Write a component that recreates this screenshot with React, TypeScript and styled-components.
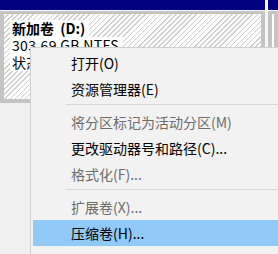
import React from 'react';
import styled, { createGlobalStyle } from 'styled-components';

const Global = createGlobalStyle`
  html, body { margin: 0; padding: 0; background: #f0f0f0; }
  body { font-family: "Noto Sans CJK SC", "Noto Sans", sans-serif; }
`;

const Screen = styled.div`
  position: relative;
  width: 278px;
  height: 254px;
  overflow: hidden;
  background: #f0f0f0;
`;

const DiskRow = styled.div`
  display: flex;
  gap: 3px;
  height: 103px;
  background: #f7f7f7;
`;

const Partition = styled.div<{ $width?: number }>`
  display: flex;
  flex-direction: column;
  gap: 1px;
  width: ${(p) => (p.$width ? `${p.$width}px` : 'auto')};
  flex: ${(p) => (p.$width ? 'none' : '1')};
  min-width: 0;
`;

const Header = styled.div`
  height: 10px;
  background: #000080;
`;

const Body = styled.div<{ $selected?: boolean }>`
  flex: 1;
  min-height: 0;
  overflow: hidden;
  border: 4px solid #c4c4c4;
  border-top-width: 3px;
  padding: 6px 0 0 ${(p) => (p.$selected ? 6 : 0)}px;
  background: ${(p) =>
    p.$selected
      ? 'repeating-linear-gradient(135deg, #ffffff 0px, #ffffff 2.5px, #d0d0d0 2.5px, #d0d0d0 3.6px)'
      : '#ffffff'};
  font-size: 14px;
  line-height: 17px;
  color: #000;
  white-space: nowrap;
`;

const Label = styled.div<{ $bold?: boolean }>`
  width: fit-content;
  background: #ffffff;
  padding: 0 4px 0 2px;
  font-weight: ${(p) => (p.$bold ? 700 : 400)};
  letter-spacing: ${(p) => (p.$bold ? 0 : 0.35)}px;
  word-spacing: ${(p) => (p.$bold ? 3 : 0)}px;
`;

const Menu = styled.div`
  position: absolute;
  left: 30px;
  top: 47px;
  width: 270px;
  height: 230px;
  box-sizing: border-box;
  display: flex;
  flex-direction: column;
  padding: 2px;
  background: #f2f2f2;
  border: 1px solid #cfcfcf;
  font-size: 14px;
`;

const Item = styled.div<{ $disabled?: boolean; $active?: boolean }>`
  height: 26px;
  box-sizing: border-box;
  display: flex;
  align-items: center;
  padding-left: 37px;
  border: 1px solid ${(p) => (p.$active ? '#90c8f6' : 'transparent')};
  background: ${(p) => (p.$active ? '#91c9f7' : 'transparent')};
  color: ${(p) => (p.$disabled ? '#6d6d6d' : '#000000')};
  white-space: nowrap;
`;

const Separator = styled.div`
  height: 1px;
  margin: 2px 0 4px 33px;
  background: #d7d7d7;
`;

type Entry = { label?: string; disabled?: boolean; active?: boolean; sep?: boolean };

const entries: Entry[] = [
  { label: '打开(O)' },
  { label: '资源管理器(E)' },
  { sep: true },
  { label: '将分区标记为活动分区(M)', disabled: true },
  { label: '更改驱动器号和路径(C)...' },
  { label: '格式化(F)...', disabled: true },
  { sep: true },
  { label: '扩展卷(X)...', disabled: true },
  { label: '压缩卷(H)...', active: true },
];

export default function App() {
  return (
    <Screen>
      <Global />
      <DiskRow>
        <Partition $width={265}>
          <Header />
          <Body $selected>
            <Label $bold>新加卷 (D:)</Label>
            <Label>303.69 GB NTFS</Label>
            <Label>状态良好 (基本数据分区)</Label>
          </Body>
        </Partition>
        <Partition>
          <Header />
          <Body>
            <Label $bold>新加卷 (E:)</Label>
          </Body>
        </Partition>
      </DiskRow>
      <Menu>
        {entries.map((e, i) =>
          e.sep ? (
            <Separator key={i} />
          ) : (
            <Item key={i} $disabled={e.disabled} $active={e.active}>
              {e.label}
            </Item>
          )
        )}
      </Menu>
    </Screen>
  );
}
